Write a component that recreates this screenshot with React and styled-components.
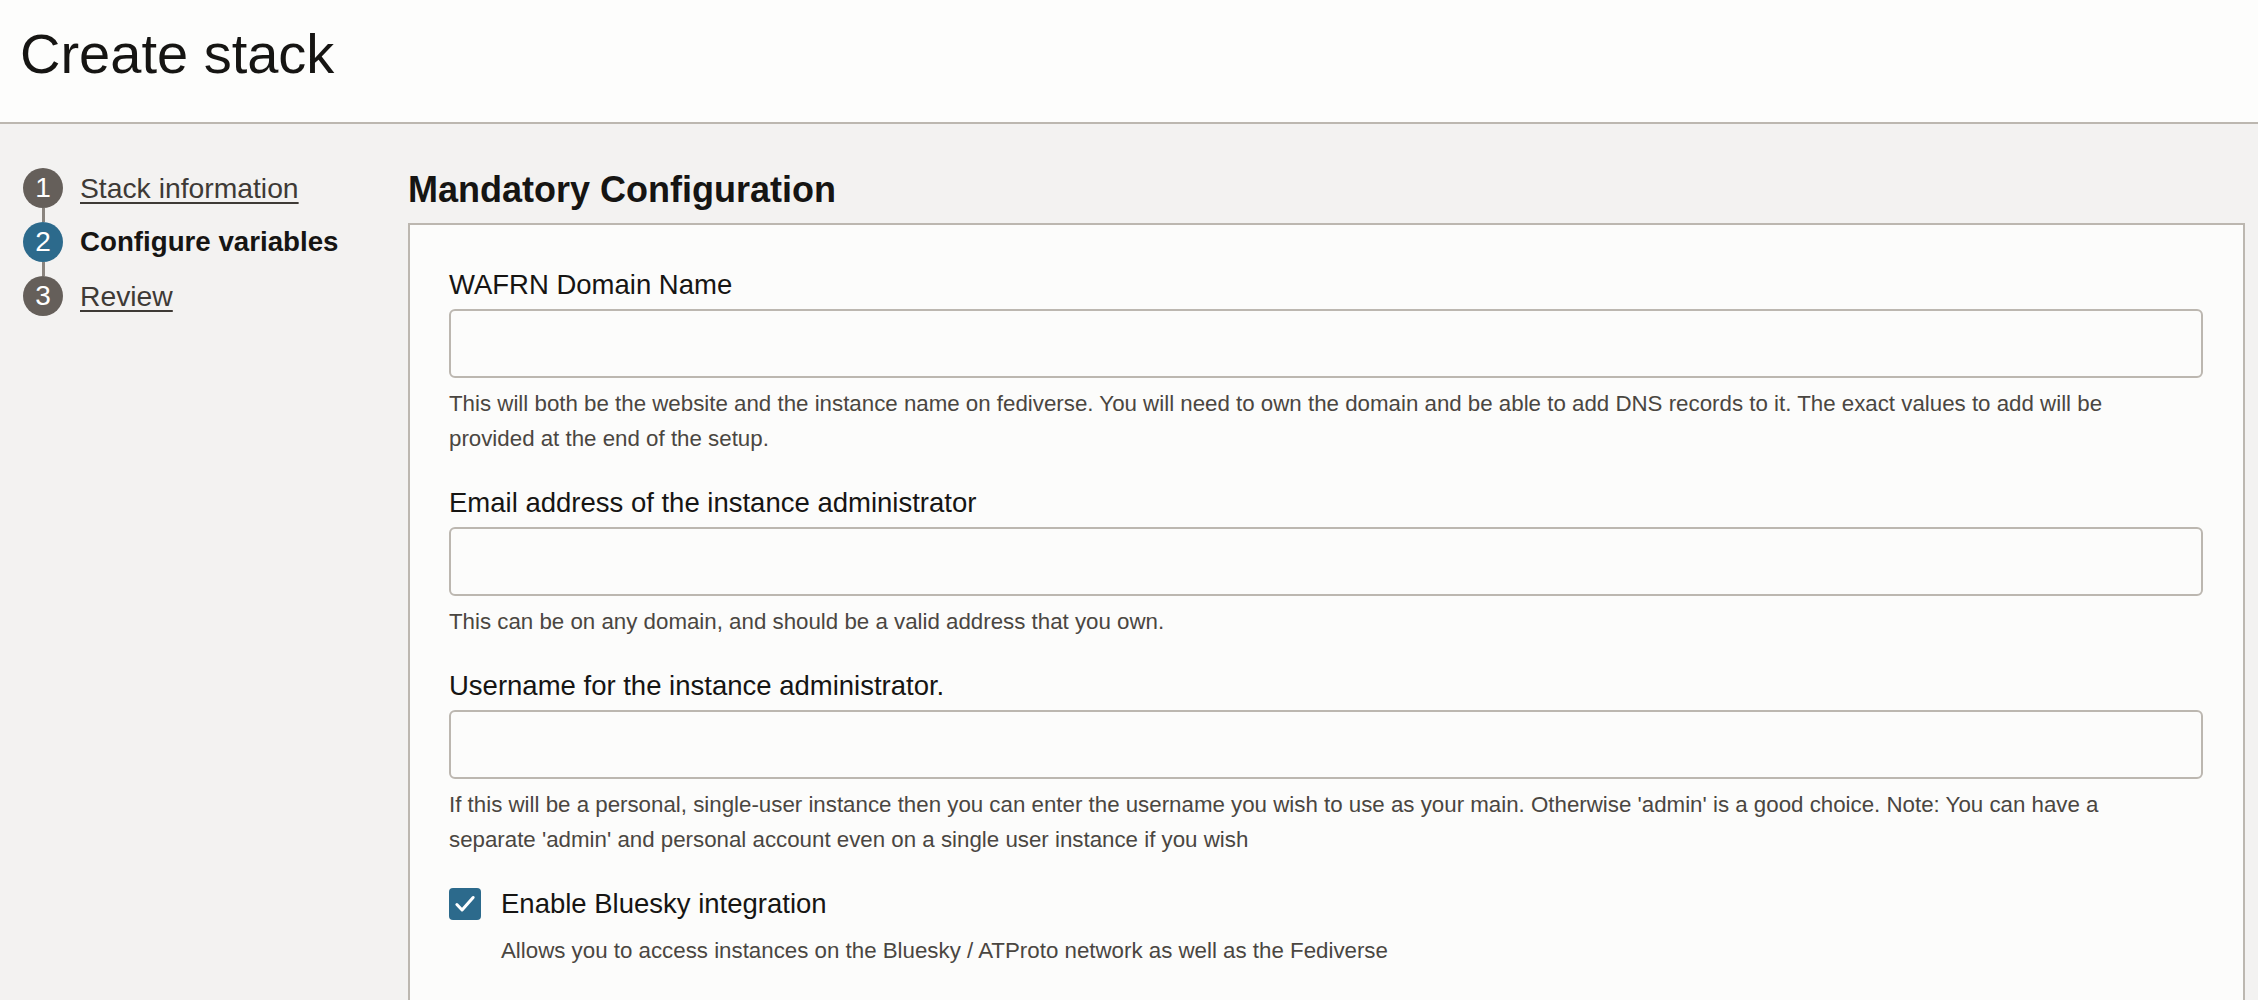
import React from "react";
import styled, { createGlobalStyle } from "styled-components";

const GlobalStyle = createGlobalStyle`
    html, body {
        margin: 0;
        padding: 0;
        background-color: #f3f2f1;
        font-family: "Liberation Sans", Arial, sans-serif;
        color: #161513;
    }
    * {
        box-sizing: border-box;
    }
`;

const steps = [
    { num: 1, label: "Stack information" },
    { num: 2, label: "Configure variables", active: true },
    { num: 3, label: "Review" },
];

const fields = [
    {
        label: "WAFRN Domain Name",
        help: "This will both be the website and the instance name on fediverse. You will need to own the domain and be able to add DNS records to it. The exact values to add will be provided at the end of the setup.",
    },
    {
        label: "Email address of the instance administrator",
        help: "This can be on any domain, and should be a valid address that you own.",
    },
    {
        label: "Username for the instance administrator.",
        help: "If this will be a personal, single-user instance then you can enter the username you wish to use as your main. Otherwise 'admin' is a good choice. Note: You can have a separate 'admin' and personal account even on a single user instance if you wish",
    },
];

const App = () => {
    return (
        <>
            <GlobalStyle />
            <Header>
                <Title>Create stack</Title>
            </Header>
            <Body>
                <Sidebar>
                    {steps.map((step, idx) => (
                        <Step key={step.num} $last={idx === steps.length - 1}>
                            <StepCircle $active={step.active}>{step.num}</StepCircle>
                            {step.active ? (
                                <StepCurrent>{step.label}</StepCurrent>
                            ) : (
                                <StepLink href="#">{step.label}</StepLink>
                            )}
                        </Step>
                    ))}
                </Sidebar>
                <Main>
                    <SectionTitle>Mandatory Configuration</SectionTitle>
                    <Panel>
                        {fields.map((field) => (
                            <Field key={field.label}>
                                <Label>{field.label}</Label>
                                <TextInput type="text" />
                                <Help>{field.help}</Help>
                            </Field>
                        ))}
                        <CheckRow>
                            <CheckBox>
                                <svg width="26" height="26" viewBox="0 0 24 24" fill="none">
                                    <path d="M4.5 12.5l4.8 5L19.5 6" stroke="#ffffff" strokeWidth="2.8" strokeLinecap="round" strokeLinejoin="round" />
                                </svg>
                            </CheckBox>
                            <CheckLabel>Enable Bluesky integration</CheckLabel>
                        </CheckRow>
                        <CheckHelp>Allows you to access instances on the Bluesky / ATProto network as well as the Fediverse</CheckHelp>
                    </Panel>
                </Main>
            </Body>
        </>
    );
};

export default App;

const Header = styled.header`
    height: 124px;
    background-color: #fdfdfc;
    border-bottom: 2px solid #bcb7b0;
    padding: 14px 20px 0;
`;

const Title = styled.h1`
    margin: 0;
    font-size: 56px;
    font-weight: 400;
    line-height: 80px;
    color: #161513;
`;

const Body = styled.div`
    display: flex;
    align-items: flex-start;
    min-height: 876px;
`;

const Sidebar = styled.nav`
    width: 408px;
    flex-shrink: 0;
    padding: 44px 0 0 23px;
    display: flex;
    flex-direction: column;
`;

const Step = styled.div`
    position: relative;
    display: flex;
    align-items: center;
    gap: 17px;
    height: 40px;
    margin-bottom: ${(p) => (p.$last ? "0" : "14px")};
    &::after {
        content: "";
        display: ${(p) => (p.$last ? "none" : "block")};
        position: absolute;
        left: 19px;
        top: 40px;
        width: 3px;
        height: 14px;
        background-color: #8a847e;
    }
`;

const StepCircle = styled.span`
    width: 40px;
    height: 40px;
    border-radius: 50%;
    flex-shrink: 0;
    display: flex;
    align-items: center;
    justify-content: center;
    background-color: ${(p) => (p.$active ? "#2c6a8c" : "#655f5a")};
    color: #ffffff;
    font-size: 28px;
    line-height: 1;
`;

const StepLink = styled.a`
    font-size: 28.3px;
    color: #3e3a36;
    text-decoration: underline;
    text-underline-offset: 4px;
    text-decoration-thickness: 2px;
`;

const StepCurrent = styled.span`
    font-size: 27.7px;
    font-weight: 700;
    color: #161513;
`;

const Main = styled.main`
    flex: 1;
    padding: 44px 13px 0 0;
`;

const SectionTitle = styled.h2`
    margin: 0 0 12px;
    font-size: 36px;
    line-height: 43px;
    font-weight: 700;
    color: #161513;
`;

const Panel = styled.section`
    background-color: #fcfcfb;
    border: 2px solid #bcb7b0;
    border-bottom: none;
    padding: 43px 40px 120px 39px;
`;

const Field = styled.div`
    margin-bottom: 30px;
`;

const Label = styled.label`
    display: block;
    font-size: 27.5px;
    line-height: 34px;
    color: #161513;
    margin-bottom: 7px;
`;

const TextInput = styled.input`
    display: block;
    width: 100%;
    height: 69px;
    background-color: #fcfcfb;
    border: 2px solid #bcb7b0;
    border-radius: 6px;
    outline: none;
    font-size: 24px;
    padding: 0 16px;
`;

const Help = styled.p`
    margin: 8px 0 0;
    max-width: 1700px;
    font-size: 22.3px;
    line-height: 35px;
    color: #4a4641;
`;

const CheckRow = styled.div`
    display: flex;
    align-items: center;
    gap: 20px;
    height: 34px;
`;

const CheckBox = styled.span`
    width: 32px;
    height: 32px;
    border-radius: 4px;
    background-color: #2c6a8c;
    display: flex;
    align-items: center;
    justify-content: center;
    flex-shrink: 0;
`;

const CheckLabel = styled.span`
    font-size: 27.5px;
    line-height: 34px;
    color: #161513;
`;

const CheckHelp = styled.p`
    margin: 13px 0 0 52px;
    font-size: 22.3px;
    line-height: 34px;
    color: #4a4641;
`;
